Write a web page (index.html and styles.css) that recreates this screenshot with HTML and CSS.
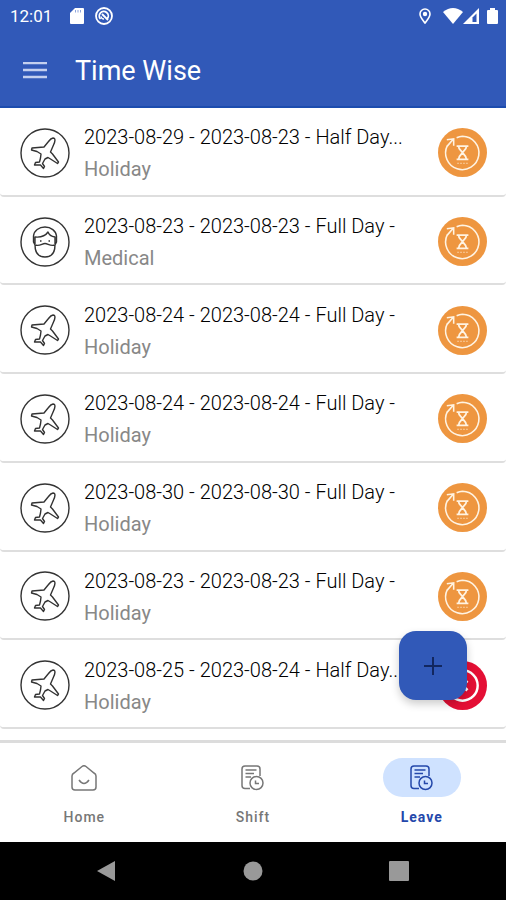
FILE: index.html
```
<!DOCTYPE html>
<html lang="en">
<head>
    <meta charset="UTF-8">
    <meta name="viewport" content="width=device-width, initial-scale=1.0">
    <title>Time Wise</title>
    <link rel="stylesheet" href="styles.css">
</head>
<body>
    <!-- shared icons -->
    <svg class="sprite" aria-hidden="true">
        <symbol id="plane" viewBox="0 0 50 50">
            <circle cx="25" cy="25" r="24"/>
            <path d="M33 10C36 10 35 14 33.500 17L30.500 24L32.500 26L38.500 34L37.500 35.500L30.500 31L28 29.500L25 31L22.500 35.500L24.500 38.500L23.500 40.500L20.500 37L14.500 37L15.500 34.500L19.500 34L20.500 30L21 26L17 23.500L11.500 22L12 20L24 19L28.500 13.500C30 11.500 31.500 10.200 33 10Z"/>
        </symbol>
        <symbol id="medical" viewBox="0 0 50 50">
            <circle cx="25" cy="25" r="24"/>
            <path d="M15 28L13.500 25V19C14 13.500 19 10 25 10S36 14 36.500 19V25L35 28M15 27V20C20 20.500 25 19.500 28 15C29 18 31.500 19.500 35 20V27M15 28C20 29.500 22 26.500 25 26.500S30 29.500 35 28M15 28C15 36 19 40 25 40S35 36 35 28"/>
            <path d="M20 24H21.500M28.500 24H30"/>
        </symbol>
        <symbol id="pending" viewBox="0 0 50 50">
            <circle cx="25" cy="25" r="25" fill="#ee9640"/>
            <path d="M19 10A17 17 0 0 1 25 8.500A17 17 0 1 1 9.500 18M9 19L15.500 11.500M9 12L16 11V18" fill="none" stroke="#fff3e2" stroke-width="1.600"/>
            <path d="M19 18.500H31M19 32H31M21 18.500C21 22 24 23 25 25.300C24 27 21 28 21 32M29 18.500C29 22 26 23 25 25.300C26 27 29 28 29 32" fill="none" stroke="#fff3e2" stroke-width="1.800"/>
            <path d="M19.500 36H31" stroke="#f9cc9e" stroke-dasharray="2 1"/>
        </symbol>
        <symbol id="rejected" viewBox="0 0 50 50">
            <circle cx="25" cy="25" r="25" fill="#e40f35"/>
            <circle cx="25" cy="25" r="15.500" fill="none" stroke="#fff" stroke-width="2.500"/>
            <path d="M20 20L30 30M30 20L20 30" stroke="#fff" stroke-width="3"/>
        </symbol>
        <symbol id="schedule" viewBox="0 0 26 26">
            <path d="M10 23.500H5Q2 23.500 2 20.500V4Q2 1 5 1H17Q20 1 20 4V11M5.500 5H16.500M5.500 8.500H14M5.500 12H11"/>
            <circle cx="16.500" cy="18" r="6.500"/>
            <path d="M15.500 15.500V18.500H19"/>
        </symbol>
    </svg>

    <div class="app">
        <header class="header">
            <div class="status-bar">
                <span class="time">12:01</span>
                <svg class="sd" width="14" height="16" viewBox="0 0 14 16"><path d="M5 0H13Q14 0 14 1V15Q14 16 13 16H1Q0 16 0 15V5Z" fill="#fff"/><path d="M5.500 2V4.500M8 2V4.500M10.500 2V4.500" stroke="#8fa5dc"/></svg>
                <svg class="sync" width="18" height="18" viewBox="0 0 18 18" fill="none" stroke="#fff" stroke-width="1.800"><circle cx="9" cy="9" r="8"/><path d="M5.500 12A4.500 4.500 0 1 1 12.500 11.500M7 7L13 13"/><path d="M6 9.500A3 3 0 0 0 9 12" stroke-width="1.500"/></svg>
                <div class="status-right">
                    <svg class="pin" width="12" height="16" viewBox="0 0 12 16"><path d="M6 15C3.500 11.500 1 9 1 6A5 5 0 0 1 11 6C11 9 8.500 11.500 6 15Z" fill="none" stroke="#fff" stroke-width="1.600"/><circle cx="6" cy="6" r="2.200" fill="#fff"/></svg>
                    <svg width="20" height="16" viewBox="0 0 20 16"><path d="M0 4Q10 -4 20 4L10 16Z" fill="#fff"/></svg>
                    <svg width="16" height="16" viewBox="0 0 16 16"><path d="M0 16L16 0V16Z" fill="#fff"/><path d="M9.500 9.500L13.500 5.500V14H9.500Z" fill="#3159b8"/></svg>
                    <svg class="battery" width="11" height="16" viewBox="0 0 11 16"><path d="M3 0H8V2H10Q11 2 11 3V15Q11 16 10 16H1Q0 16 0 15V3Q0 2 1 2H3Z" fill="#fff"/></svg>
                </div>
            </div>
            <div class="toolbar">
                <button class="menu-button" aria-label="Menu">
                    <svg width="24" height="18" viewBox="0 0 24 18"><path d="M0 1H24M0 8H24M0 15H24" stroke="#c4d0ef" stroke-width="2.500"/></svg>
                </button>
                <h1 class="title">Time Wise</h1>
            </div>
        </header>

        <main class="content">
            <ul class="leave-list">
                <li class="leave-item">
                    <svg class="type-icon"><use href="#plane"/></svg>
                    <div class="leave-text">
                        <p class="leave-date">2023-08-29 - 2023-08-23 - Half Day...</p>
                        <p class="leave-type">Holiday</p>
                    </div>
                    <svg class="state-icon"><use href="#pending"/></svg>
                </li>
                <li class="leave-item">
                    <svg class="type-icon"><use href="#medical"/></svg>
                    <div class="leave-text">
                        <p class="leave-date">2023-08-23 - 2023-08-23 - Full Day -</p>
                        <p class="leave-type">Medical</p>
                    </div>
                    <svg class="state-icon"><use href="#pending"/></svg>
                </li>
                <li class="leave-item">
                    <svg class="type-icon"><use href="#plane"/></svg>
                    <div class="leave-text">
                        <p class="leave-date">2023-08-24 - 2023-08-24 - Full Day -</p>
                        <p class="leave-type">Holiday</p>
                    </div>
                    <svg class="state-icon"><use href="#pending"/></svg>
                </li>
                <li class="leave-item">
                    <svg class="type-icon"><use href="#plane"/></svg>
                    <div class="leave-text">
                        <p class="leave-date">2023-08-24 - 2023-08-24 - Full Day -</p>
                        <p class="leave-type">Holiday</p>
                    </div>
                    <svg class="state-icon"><use href="#pending"/></svg>
                </li>
                <li class="leave-item">
                    <svg class="type-icon"><use href="#plane"/></svg>
                    <div class="leave-text">
                        <p class="leave-date">2023-08-30 - 2023-08-30 - Full Day -</p>
                        <p class="leave-type">Holiday</p>
                    </div>
                    <svg class="state-icon"><use href="#pending"/></svg>
                </li>
                <li class="leave-item">
                    <svg class="type-icon"><use href="#plane"/></svg>
                    <div class="leave-text">
                        <p class="leave-date">2023-08-23 - 2023-08-23 - Full Day -</p>
                        <p class="leave-type">Holiday</p>
                    </div>
                    <svg class="state-icon"><use href="#pending"/></svg>
                </li>
                <li class="leave-item">
                    <svg class="type-icon"><use href="#plane"/></svg>
                    <div class="leave-text">
                        <p class="leave-date">2023-08-25 - 2023-08-24 - Half Day...</p>
                        <p class="leave-type">Holiday</p>
                    </div>
                    <svg class="state-icon"><use href="#rejected"/></svg>
                </li>
            </ul>
            <button class="add-button" aria-label="Add leave">
                <svg width="18" height="18" viewBox="0 0 18 18"><path d="M9 0V18M0 9H18" stroke="#12275f" stroke-width="2"/></svg>
            </button>
        </main>

        <nav class="tabs">
            <a href="#" class="tab">
                <span class="tab-icon"><svg width="26" height="26" viewBox="0 0 26 26"><path d="M1 11Q1 9 3 8L11 1.500Q13 0 15 1.500L23 8Q25 9 25 11V22Q25 25 22 25H4Q1 25 1 22ZM8 15Q13 22 18 15"/></svg></span>
                <span class="tab-label">Home</span>
            </a>
            <a href="#" class="tab">
                <span class="tab-icon"><svg width="26" height="26"><use href="#schedule"/></svg></span>
                <span class="tab-label">Shift</span>
            </a>
            <a href="#" class="tab active">
                <span class="tab-icon"><svg width="26" height="26"><use href="#schedule"/></svg></span>
                <span class="tab-label">Leave</span>
            </a>
        </nav>

        <div class="system-bar">
            <button class="system-button" aria-label="Back"><svg width="20" height="22" viewBox="0 0 20 22"><path d="M0 11L18 1V21Z"/></svg></button>
            <button class="system-button" aria-label="Home"><svg width="20" height="20" viewBox="0 0 20 20"><circle cx="10" cy="10" r="9.500"/></svg></button>
            <button class="system-button" aria-label="Recent apps"><svg width="20" height="20" viewBox="0 0 20 20"><rect width="20" height="20" rx="1"/></svg></button>
        </div>
    </div>
</body>
</html>
```

FILE: styles.css
```
* {
    box-sizing: border-box;
}

body {
    margin: 0;
    background-color: #fff;
    font-family: Roboto, sans-serif;
}

button {
    border: none;
    padding: 0;
    background: none;
    cursor: pointer;
}

svg {
    display: block;
    flex-shrink: 0;
}

.sprite {
    position: absolute;
    width: 0;
    height: 0;
}

.app {
    display: flex;
    flex-direction: column;
    min-height: 100vh;
}

/* header */
.header {
    background-color: #3159b8;
    border-bottom: 2px solid #1c4cae;
    color: #fff;
}

.status-bar {
    display: flex;
    align-items: center;
    height: 32px;
    padding: 0 8px 0 10px;
}

.time {
    font-size: 17px;
    line-height: 20px;
}

.sd {
    margin-left: 18px;
}

.sync {
    margin-left: 11px;
}

.status-right {
    display: flex;
    margin-left: auto;
}

.pin {
    margin-right: 12px;
}

.battery {
    margin-left: 8px;
}

.toolbar {
    display: flex;
    align-items: center;
    height: 74px;
    padding: 3px 23px 0;
}

.title {
    margin: 0 0 0 28px;
    font-size: 27px;
    line-height: 32px;
    font-weight: 400;
}

/* leave list */
.content {
    position: relative;
    display: flex;
    flex: 1;
}

.leave-list {
    display: grid;
    grid-auto-rows: 1fr;
    width: 100%;
    margin: 0;
    padding: 0 0 11px;
    list-style: none;
}

.leave-item {
    display: flex;
    align-items: center;
    gap: 14px;
    padding: 3px 19px 0 20px;
    border-bottom: 2px solid #dedede;
    border-radius: 4px;
}

.type-icon {
    width: 50px;
    height: 50px;
    fill: none;
    stroke: #333;
    stroke-width: 1.4;
    stroke-linejoin: round;
}

.state-icon {
    width: 49px;
    height: 49px;
}

.leave-text {
    flex: 1;
    min-width: 0;
    padding-top: 1px;
}

.leave-date,
.leave-type {
    margin: 0;
    overflow: hidden;
    font-size: 20px;
    line-height: 32px;
    white-space: nowrap;
}

.leave-date {
    color: #000;
    font-weight: 300;
}

.leave-type {
    color: #888;
}

.add-button {
    position: absolute;
    right: 39px;
    bottom: 40px;
    display: flex;
    align-items: center;
    justify-content: center;
    width: 68px;
    height: 69px;
    border-radius: 17px;
    background-color: #3159b8;
    box-shadow: 0 4px 8px rgba(0,0,0,0.2);
}

/* bottom tabs */
.tabs {
    display: flex;
    height: 102px;
    border-top: 3px solid #dcdcdc;
}

.tab {
    display: flex;
    flex: 1;
    flex-direction: column;
    align-items: center;
    padding-top: 15px;
    color: #777;
    text-decoration: none;
}

.tab-icon {
    display: flex;
    align-items: center;
    justify-content: center;
    width: 78px;
    height: 39px;
    border-radius: 20px;
    fill: none;
    stroke: currentColor;
    stroke-width: 1.5;
}

.tab-label {
    margin-top: 10px;
    font-size: 14px;
    line-height: 20px;
    font-weight: 500;
    letter-spacing: 1px;
}

.active {
    color: #2448ab;
}

.active .tab-icon {
    background-color: #cfe2ff;
}

.active .tab-label {
    font-weight: 700;
}

/* system navigation */
.system-bar {
    display: flex;
    justify-content: center;
    gap: 126px;
    height: 58px;
    background-color: #000;
}

.system-button {
    fill: #999;
}
```
